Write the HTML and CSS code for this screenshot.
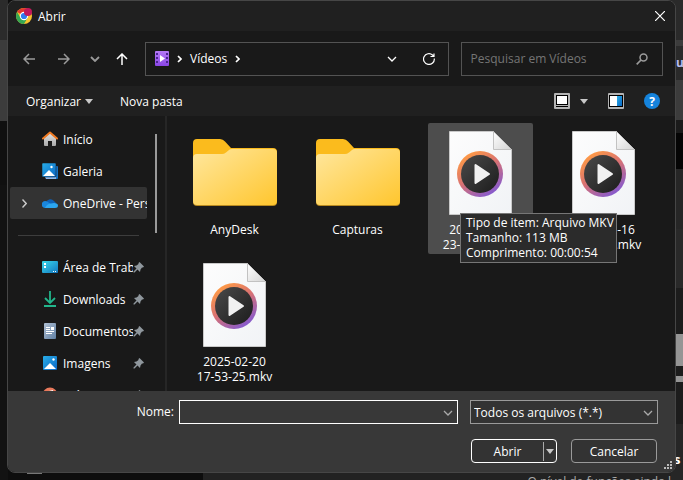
FILE: index.html
```html
<!DOCTYPE html>
<html lang="pt-BR">
<head>
<meta charset="utf-8">
<meta name="viewport" content="width=device-width, initial-scale=1">
<title>Abrir</title>
<link rel="stylesheet" href="styles.css">
</head>
<body>
<svg class="defs" width="0" height="0" aria-hidden="true">
  <defs>
    <linearGradient id="gFolder" x1="0" y1="0" x2="1" y2="1"><stop offset="0" stop-color="#ffe79e"/><stop offset="1" stop-color="#ffc62e"/></linearGradient>
    <linearGradient id="gPaper" x1="0" y1="0" x2="1" y2="1"><stop offset="0" stop-color="#fdfdfd"/><stop offset="1" stop-color="#f1f3f6"/></linearGradient>
    <linearGradient id="gFold" x1="0" y1="0" x2="1" y2="1"><stop offset="0" stop-color="#fff"/><stop offset="1" stop-color="#d4d4d4"/></linearGradient>
    <linearGradient id="gRing" x1=".15" y1="0.1" x2=".75" y2="1"><stop offset="0" stop-color="#ff9b45"/><stop offset=".45" stop-color="#d97272"/><stop offset="1" stop-color="#7f58d6"/></linearGradient>
    <linearGradient id="gDisc" x1="0" y1="0" x2="1" y2="1"><stop offset="0" stop-color="#4a4a4a"/><stop offset="1" stop-color="#1c1c1c"/></linearGradient>
    <linearGradient id="gBlue" x1="0" y1="0" x2="1" y2="1"><stop offset="0" stop-color="#28aee8"/><stop offset="1" stop-color="#0a66c4"/></linearGradient>
    <linearGradient id="gDesk" x1="0" y1="0" x2="1" y2="1"><stop offset="0" stop-color="#3ad8ea"/><stop offset="1" stop-color="#1277c0"/></linearGradient>
    <linearGradient id="gViolet" x1="0" y1="0" x2="0" y2="1"><stop offset="0" stop-color="#b57af5"/><stop offset="1" stop-color="#8a45e6"/></linearGradient>
    <linearGradient id="gHouse" x1="0" y1="0" x2="0" y2="1"><stop offset="0" stop-color="#e2e2e2"/><stop offset="1" stop-color="#a9a9a9"/></linearGradient>
    <linearGradient id="gDoc" x1="0" y1="0" x2="1" y2="1"><stop offset="0" stop-color="#b0c0d4"/><stop offset="1" stop-color="#6080a4"/></linearGradient>
    <symbol id="folder" viewBox="0 0 84 67">
      <path fill="#fbbb1d" d="M0 4Q0 0 4 0H27Q30 0 32 2.500L38 9H80Q84 9 84 13V40H0Z"/>
      <path fill="#b98a1f" d="M0 60H84V63Q84 67 80 67H4Q0 67 0 63Z"/>
      <path fill="url(#gFolder)" d="M0 19Q0 15 4 15H29Q31 15 33 13.500L36 11Q37 10 39 10H80Q84 10 84 14V62Q84 66 80 66H4Q0 66 0 62Z"/>
    </symbol>
    <symbol id="video" viewBox="0 0 63 84">
      <path fill="url(#gPaper)" stroke="#c9c9c9" d="M.5 .5H44.500L62.500 18.500V83.500H.5Z"/>
      <path fill="url(#gFold)" stroke="#c2c2c2" d="M44.500 .5V18.500H62.500Z"/>
      <circle cx="31" cy="43" r="23" fill="url(#gRing)"/>
      <circle cx="31" cy="43" r="19" fill="url(#gDisc)"/>
      <path fill="#f1f1f1" stroke="#f1f1f1" stroke-width="2" stroke-linejoin="round" d="M26.500 34V52L40 43Z"/>
    </symbol>
    <symbol id="pin" viewBox="0 0 12 12">
      <path fill="#8f979d" d="M6.500 1 11 5.500 10 6.500H9L7.500 8.500 7 11 4.500 8.500 1.500 11.500 .5 11.500V10.500L3.500 7.500 1 5 3.500 4.500 5.500 3V2Z"/>
    </symbol>
    <symbol id="down" viewBox="0 0 10 6"><path fill="none" stroke="currentColor" stroke-width="1.300" d="M1 1 5 5 9 1"/></symbol>
    <symbol id="next" viewBox="0 0 5 8"><path fill="none" stroke="currentColor" stroke-width="1.700" d="M1 1 4 4 1 7"/></symbol>
  </defs>
</svg>

<div class="backdrop" aria-hidden="true">
  <div class="edge-left"></div>
  <div class="floor"><span class="tick"></span><span class="floor-text">O nível de funções ainda l</span></div>
  <div class="edge-right"><span class="edge-link">u</span><span class="edge-bold">s</span></div>
</div>

<main class="dialog">
  <header class="titlebar">
    <svg width="16" height="16" viewBox="0 0 16 16" aria-hidden="true">
      <circle cx="8" cy="8" r="8" fill="#f8c22e"/>
      <path fill="#e23b2e" d="M8 8 1.100 4A8 8 0 0 1 14.900 4Z"/>
      <path fill="#35a853" d="M1.100 4A8 8 0 0 0 8 16L11.500 10 8 8 4.600 10Z"/>
      <circle cx="8" cy="8" r="4.200" fill="#fff"/><circle cx="8" cy="8" r="3.100" fill="#2f7df0"/>
      <circle cx="12" cy="4" r="4" fill="#c2185b"/>
    </svg>
    <h1>Abrir</h1>
    <button class="plain close" aria-label="Fechar"><svg width="10" height="10" viewBox="0 0 10 10"><path stroke="#fff" stroke-width="1.200" d="M0 0 10 10M10 0 0 10"/></svg></button>
  </header>

  <nav class="navbar" aria-label="Navegação">
    <div class="arrows">
      <button class="plain dim wide" aria-label="Voltar"><svg width="12" height="12" viewBox="0 0 12 12"><path fill="none" stroke="currentColor" stroke-width="1.500" d="M12 6H1M6 1 1 6 6 11"/></svg></button>
      <button class="plain dim wide" aria-label="Avançar"><svg width="12" height="12" viewBox="0 0 12 12"><path fill="none" stroke="currentColor" stroke-width="1.500" d="M0 6H11M6 1 11 6 6 11"/></svg></button>
      <button class="plain dim" aria-label="Locais recentes"><svg width="10" height="6" viewBox="0 0 10 6"><path fill="none" stroke="currentColor" stroke-width="1.800" d="M1 1 5 5 9 1"/></svg></button>
      <button class="plain" aria-label="Acima"><svg width="12" height="12" viewBox="0 0 12 12"><path fill="none" stroke="currentColor" stroke-width="1.500" d="M6 12V1M1 6 6 1 11 6"/></svg></button>
    </div>
    <div class="address">
      <svg width="14" height="15" viewBox="0 0 14 15" aria-hidden="true"><rect width="14" height="15" rx="1" fill="url(#gViolet)"/><path stroke="#4a2391" stroke-width="2" stroke-dasharray="2 2" d="M2 2V14M12 2V14"/><path fill="#fff" d="M5 4V11L10 7.500Z"/></svg>
      <svg width="5" height="8"><use href="#next"/></svg>
      <a href="#videos">Vídeos</a>
      <svg width="5" height="8"><use href="#next"/></svg>
      <button class="plain history" aria-label="Locais anteriores"><svg width="10" height="6"><use href="#down"/></svg></button>
      <button class="plain" aria-label="Atualizar"><svg width="12" height="12" viewBox="0 0 12 12"><path fill="none" stroke="currentColor" stroke-width="1.200" d="M11.300 5.500A5.400 5.400 0 1 1 9.500 2L11 3.500M11 .5V3.500H7.500"/></svg></button>
    </div>
    <div class="search">
      <input type="search" aria-label="Pesquisar" placeholder="Pesquisar em Vídeos">
      <svg width="12" height="12" viewBox="0 0 12 12" aria-hidden="true"><circle cx="7.500" cy="4.500" r="3.500" fill="none" stroke="#9a9a9a" stroke-width="1.500"/><path stroke="#9a9a9a" stroke-width="1.700" d="M5 7 .7 11.300"/></svg>
    </div>
  </nav>

  <div class="toolbar">
    <button class="plain">Organizar <span class="caret"></span></button>
    <button class="plain">Nova pasta</button>
    <div class="views">
      <button class="plain" aria-label="Modo de exibição"><svg width="16" height="16" viewBox="0 0 16 16"><rect width="16" height="16" rx="1" fill="#b4b4b4"/><rect x="2" y="2" width="12" height="12" fill="#000"/><path fill="#fff" d="M3 3H13V11H3Z"/><path fill="#b4b4b4" d="M2 12H14V13H2Z"/></svg><span class="caret"></span></button>
      <button class="plain" aria-label="Painel de visualização"><svg width="16" height="16" viewBox="0 0 16 16"><rect width="16" height="16" rx="1" fill="#b4b4b4"/><rect x="1" y="2" width="14" height="12" fill="#000"/><path fill="#fff" d="M2 3H9V13H2Z"/><path fill="url(#gBlue)" d="M9 3H14V13H9Z"/></svg></button>
      <button class="plain help" aria-label="Ajuda">?</button>
    </div>
  </div>

  <div class="content">
    <aside class="sidebar">
      <ul class="places">
        <li><a href="#inicio"><svg width="16" height="16" viewBox="0 0 16 16"><path fill="url(#gHouse)" d="M2 7 8 2 14 7V14Q14 15 13 15H10V10H6V15H3Q2 15 2 14Z"/><path fill="none" stroke="#f07a22" stroke-width="2" stroke-linejoin="round" stroke-linecap="round" d="M1 7.500 8 1.500 15 7.500"/></svg><span>Início</span></a></li>
        <li><a href="#galeria"><svg width="16" height="16" viewBox="0 0 16 16"><path fill="#1471c4" d="M4 3H15Q16 3 16 4V15Q16 16 15 16H4Z"/><path fill="#8bb9ee" d="M3 14H14V16H4Z"/><rect width="14" height="14" rx="1" fill="url(#gBlue)" stroke="#191919" stroke-width=".5"/><path fill="#fff" d="M1 13 7 7 13 13Z"/><circle cx="9.500" cy="4" r="1.200" fill="#fff"/></svg><span>Galeria</span></a></li>
        <li><a class="current" href="#onedrive"><svg class="expand" width="5" height="9" viewBox="0 0 5 8"><path fill="none" stroke="#ccc" stroke-width="1.400" d="M.5 0 4.200 4 .5 8"/></svg><svg width="16" height="16" viewBox="0 0 16 16"><path fill="#0f62b8" d="M3.500 8A5 5 0 0 1 12 6L14 8 8 12Z"/><path fill="#1a86dc" d="M3.500 13A3.500 3.500 0 1 1 5 6.500L12 11V13Z"/><path fill="#2ba6f0" d="M3 13Q5 8.500 9 8.500L12 8Q16 8 16 10.500T13 13Z"/></svg><span>OneDrive - Personal</span></a></li>
        <li class="rule" role="separator"></li>
        <li><a href="#area"><svg width="16" height="16" viewBox="0 0 16 16"><rect y="2" width="16" height="12" rx="1" fill="url(#gDesk)"/><path fill="#fff" d="M2 4H4V6H2ZM2 7H4V9H2ZM11 12H12V13H11ZM13 12H14V13H13Z"/></svg><span>Área de Trabalho</span><svg class="pin" width="12" height="12"><use href="#pin"/></svg></a></li>
        <li><a href="#downloads"><svg width="16" height="16" viewBox="0 0 16 16"><path fill="none" stroke="#22b68c" stroke-width="1.800" d="M8 0V11M3 7 8 12 13 7M2 15H14"/></svg><span>Downloads</span><svg class="pin" width="12" height="12"><use href="#pin"/></svg></a></li>
        <li><a href="#documentos"><svg width="16" height="16" viewBox="0 0 16 16"><rect x="2" width="12" height="16" rx="1" fill="url(#gDoc)"/><path fill="#fff" d="M4 4H8V5H4ZM9 4H12V7H9ZM4 6H8V7H4ZM4 8H12V9H4ZM4 10H10V11H4Z"/></svg><span>Documentos</span><svg class="pin" width="12" height="12"><use href="#pin"/></svg></a></li>
        <li><a href="#imagens"><svg width="16" height="16" viewBox="0 0 16 16"><rect x="1" y="1" width="14" height="14" rx="1" fill="url(#gBlue)"/><path fill="#fff" d="M2 14 8 8 14 14Z"/><circle cx="11.500" cy="4.500" r="1.200" fill="#fff"/></svg><span>Imagens</span><svg class="pin" width="12" height="12"><use href="#pin"/></svg></a></li>
        <li><a href="#musicas"><svg width="16" height="16" viewBox="0 0 16 16"><circle cx="8" cy="8" r="7.500" fill="#e8795c"/><path fill="#fff" d="M7 4 11 3V5L8 6V11H7Z"/></svg><span>Músicas</span><svg class="pin" width="12" height="12"><use href="#pin"/></svg></a></li>
      </ul>
      <div class="track"><div class="thumb"></div></div>
    </aside>

    <section class="files" aria-label="Vídeos">
      <figure><div class="pic"><svg width="84" height="67"><use href="#folder"/></svg></div><figcaption>AnyDesk</figcaption></figure>
      <figure><div class="pic"><svg width="84" height="67"><use href="#folder"/></svg></div><figcaption>Capturas</figcaption></figure>
      <figure class="hover"><div class="pic"><svg width="63" height="84"><use href="#video"/></svg></div><figcaption>2025-01-15<br>23-14-08.mkv</figcaption>
        <div class="tooltip" role="tooltip">Tipo de item: Arquivo MKV<br>Tamanho: 113 MB<br>Comprimento: 00:00:54</div></figure>
      <figure><div class="pic"><svg width="63" height="84"><use href="#video"/></svg></div><figcaption>2025-02-16<br>20-31-42.mkv</figcaption></figure>
      <figure><div class="pic"><svg width="63" height="84"><use href="#video"/></svg></div><figcaption>2025-02-20<br>17-53-25.mkv</figcaption></figure>
    </section>
  </div>

  <form class="footer">
    <label for="nome">Nome:</label>
    <div class="combo name"><input id="nome" type="text"><svg width="10" height="6"><use href="#down"/></svg></div>
    <div class="combo kind"><select aria-label="Tipo de arquivo"><option>Todos os arquivos (*.*)</option></select><svg width="10" height="6"><use href="#down"/></svg></div>
    <div class="actions">
      <div class="split"><button type="button">Abrir</button><button type="button" class="more" aria-label="Mais opções"><span class="caret"></span></button></div>
      <button type="button" class="cancel">Cancelar</button>
    </div>
    <svg class="grip" width="8" height="8" viewBox="0 0 8 8" aria-hidden="true"><path fill="#bbb" d="M6 0H8V2H6ZM3 3H5V5H3ZM6 3H8V5H6ZM0 6H2V8H0ZM3 6H5V8H3ZM6 6H8V8H6Z"/></svg>
  </form>
</main>
</body>
</html>
```
FILE: styles.css
```css
* { box-sizing: border-box; }

body {
  margin: 0;
  height: 100vh;
  padding: 0 7px 7px;
  overflow: hidden;
  background: #121212;
  color: #fff;
  font: 12px/15px "Open Sans", "Noto Sans", sans-serif;
}

.defs { position: absolute; }

svg { display: block; flex: none; }

h1, ul, figure { margin: 0; padding: 0; font: inherit; }

a { color: inherit; text-decoration: none; }

button, input, select { font: inherit; color: inherit; }

.plain {
  display: flex;
  align-items: center;
  justify-content: center;
  padding: 0;
  border: 0;
  background: none;
}

.dim { color: #9a9a9a; }

.caret {
  border: 4px solid transparent;
  border-top: 5px solid #c8c8c8;
  border-bottom: 0;
}

/* Windows behind the dialog */
.backdrop {
  position: absolute;
  inset: 0;
  z-index: -1;
  display: grid;
  grid-template-columns: 8px 1fr 12px;
  overflow: hidden;
}

.edge-left {
  background: linear-gradient(#2b2b2b 40px, #3c3c3c 40px 121px, #101010 121px 185px, #121212 185px);
}

.edge-right {
  display: flex;
  flex-direction: column;
  padding: 55px 0 0 3px;
  background: linear-gradient(#2a2a2a 40px, #3c3c3c 40px 46px, #2a2a2a 46px 80px, #3c3c3c 80px 120px, #1b1b1b 120px 133px, #050505 133px 169px, #262626 169px 229px, #292929 229px 288px, #1c1c1c 288px 334px, #959595 334px 366px, #1c1c1c 366px 376px, #959595 376px 382px, #1c1c1c 382px 424px, #262626 424px);
  font-weight: bold;
}

.edge-link { padding-left: 2px; color: #b9bdf0; }

.edge-bold { margin-top: auto; margin-bottom: 13px; font-size: 13px; }

.floor {
  display: flex;
  align-items: flex-end;
  justify-content: space-between;
  height: 100%;
  padding-left: 19px;
  overflow: hidden;
  background: linear-gradient(90deg, #0d0d0d 195px, #222 195px);
}

.tick { width: 15px; height: 8px; border-top: 2px solid #777; }

.floor-text { margin-bottom: -9px; color: #aaa; white-space: nowrap; }

.dialog {
  display: flex;
  flex-direction: column;
  height: 100%;
  border: 1px solid #464646;
  border-radius: 8px;
  overflow: hidden;
  background: #191919;
}

.titlebar {
  display: flex;
  align-items: center;
  gap: 6px;
  height: 30px;
  padding: 0 10px 0 8px;
  background: #202020;
}

.close { margin-left: auto; }

.navbar {
  display: grid;
  grid-template-columns: 125px 3fr 2fr;
  align-items: center;
  column-gap: 12px;
  height: 55px;
  padding-right: 12px;
}

.arrows { display: flex; gap: 11px; padding-left: 9px; }
.arrows .plain { width: 16px; height: 24px; }
.arrows .wide { width: 24px; }

.address, .search {
  display: flex;
  align-items: center;
  height: 34px;
  border: 1px solid #535353;
}

.address { gap: 8px; padding: 0 13px 0 9px; }
.history { margin-left: auto; margin-right: 18px; }

.search { padding: 0 14px 0 9px; }

.search input {
  flex: 1;
  min-width: 0;
  padding: 0;
  border: 0;
  outline: 0;
  background: none;
}

.search input::placeholder { color: #757575; opacity: 1; }

.toolbar {
  display: flex;
  align-items: center;
  gap: 27px;
  height: 30px;
  padding: 0 15px 0 18px;
  background: #202020;
}

.toolbar .plain { gap: 4px; }

.views { display: flex; align-items: center; gap: 20px; margin-left: auto; }
.views .plain:first-child { gap: 10px; }

.views .help {
  width: 16px;
  height: 16px;
  border-radius: 50%;
  background: #1583dc;
  font-weight: bold;
}

.content { display: flex; flex: 1; min-height: 0; }

.sidebar {
  display: flex;
  flex: none;
  width: 159px;
  padding: 7px 8px 0 2px;
  border-right: 2px solid #262626;
  overflow: hidden;
}

.places { flex: none; width: 137px; list-style: none; }

.places a {
  display: flex;
  align-items: center;
  gap: 5px;
  height: 32px;
  padding-left: 32px;
}

.places span { flex: 1; overflow: hidden; white-space: nowrap; }

.places .current {
  padding-left: 12px;
  border-radius: 2px;
  background: #333;
}

.expand { margin-right: 10px; }

.pin { margin: 0 2px 0 -5px; }

.rule { height: 17px; margin: 0 8px 15px; border-bottom: 1px solid #3d3d3d; }

.track { margin-left: auto; padding-top: 11px; }

.thumb { width: 2px; height: 99px; background: #9a9a9a; }

.files {
  display: grid;
  flex: 1;
  grid-template-columns: repeat(auto-fill, 105px);
  grid-auto-rows: 131px;
  align-content: start;
  gap: 1px 18px;
  padding: 7px 0 0 15px;
}

.files figure { position: relative; border-radius: 2px; text-align: center; }

.files .hover { z-index: 1; background: #4d4d4d; }

.pic {
  display: flex;
  align-items: center;
  justify-content: center;
  height: 99px;
}

.tooltip {
  position: absolute;
  top: 90px;
  left: 32px;
  padding: 1px 2px 2px 5px;
  border: 1px solid #767676;
  background: #2b2b2b;
  text-align: left;
  white-space: nowrap;
}

.footer {
  position: relative;
  display: grid;
  grid-template-columns: 166px 1fr 188px;
  row-gap: 6px;
  height: 81px;
  padding: 9px 17px 0 0;
  background: #383838;
}

.footer label { padding-top: 4px; text-align: right; }

.combo { position: relative; height: 24px; border: 1px solid #9a9a9a; color: #aaa; }

.combo input, .combo select {
  width: 100%;
  height: 100%;
  padding: 0 3px;
  border: 0;
  outline: 0;
  appearance: none;
  background: none;
  color: #fff;
}

.combo svg { position: absolute; top: 9px; right: 4px; }

.name { margin: 0 12px 0 5px; border-color: #fff; }

.kind { background: #333; }

.actions {
  display: grid;
  grid-column: 3;
  grid-template-columns: 1fr 1fr;
  gap: 14px;
  height: 24px;
  padding: 0 1px;
}

.split, .cancel {
  display: flex;
  align-items: center;
  justify-content: center;
  padding: 0;
  border: 1px solid #9a9a9a;
  border-radius: 4px;
  background: #333;
}

.split { border-color: #fff; }

.split button { flex: 1; padding: 0; border: 0; background: none; }

.split .more {
  display: flex;
  flex: none;
  justify-content: center;
  padding: 7px 2px;
  border-left: 1px solid #aaa;
}

.grip { position: absolute; right: 3px; bottom: 3px; }
```
